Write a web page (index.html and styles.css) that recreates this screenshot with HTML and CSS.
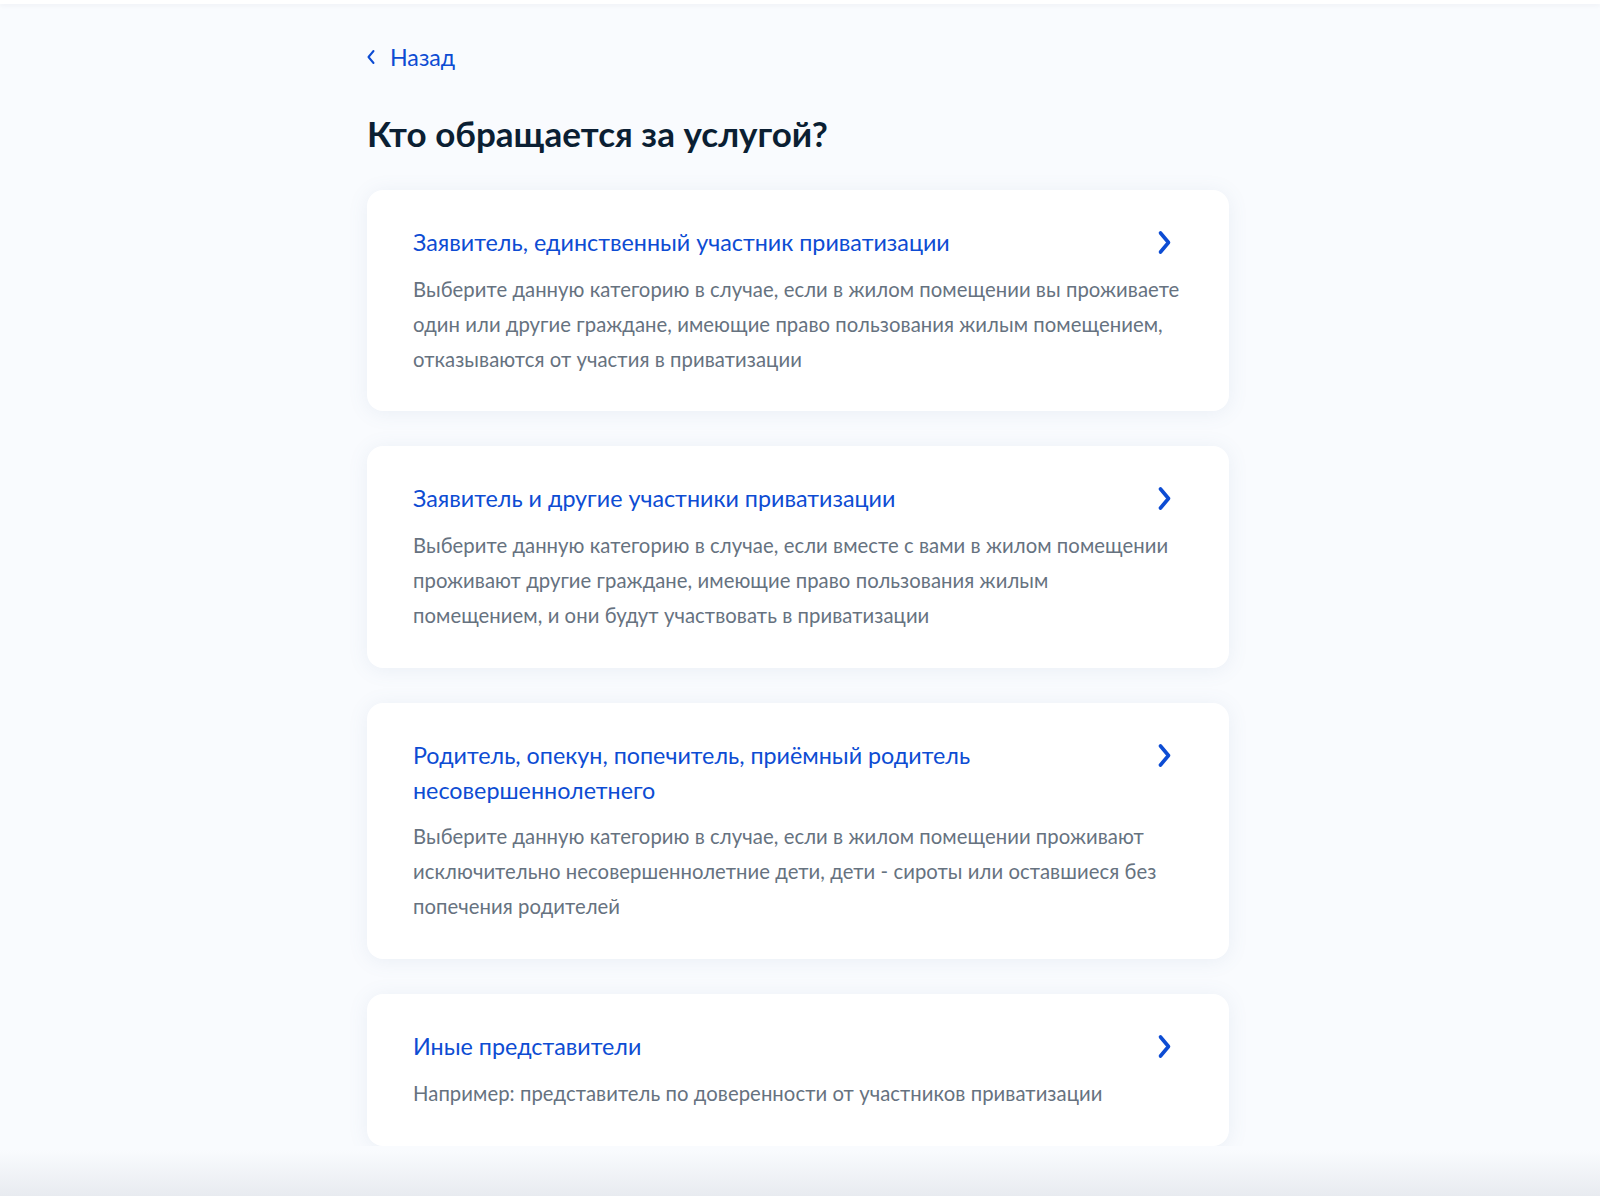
FILE: index.html
```html
<!DOCTYPE html>
<html lang="ru">
<head>
  <meta charset="UTF-8">
  <meta name="viewport" content="width=device-width, initial-scale=1.0">
  <title>Кто обращается за услугой?</title>
  <link rel="stylesheet" href="styles.css">
</head>
<body>
  <div class="topbar"></div>
  <div class="container">
    <a class="back" href="#">
      <svg class="back-icon" width="10" height="16" viewBox="0 0 10 16"><path d="M7.5 2 L2.5 8 L7.5 14" fill="none" stroke="currentColor" stroke-width="2" stroke-linecap="round" stroke-linejoin="round"/></svg>
      Назад
    </a>
    <h1 class="page-title">Кто обращается за услугой?</h1>

    <div class="choices">
      <a class="choice" href="#">
        <div class="choice-head">
          <div class="choice-title">Заявитель, единственный участник приватизации</div>
          <svg class="arrow" width="35" height="35" viewBox="0 0 35 35"><path d="M12.5 8 L20.5 17.5 L12.5 27" fill="none" stroke="currentColor" stroke-width="3.6" stroke-linecap="round" stroke-linejoin="round"/></svg>
        </div>
        <div class="choice-text">Выберите данную категорию в случае, если в жилом помещении вы проживаете один или другие граждане, имеющие право пользования жилым помещением, отказываются от участия в приватизации</div>
      </a>

      <a class="choice" href="#">
        <div class="choice-head">
          <div class="choice-title">Заявитель и другие участники приватизации</div>
          <svg class="arrow" width="35" height="35" viewBox="0 0 35 35"><path d="M12.5 8 L20.5 17.5 L12.5 27" fill="none" stroke="currentColor" stroke-width="3.6" stroke-linecap="round" stroke-linejoin="round"/></svg>
        </div>
        <div class="choice-text">Выберите данную категорию в случае, если вместе с вами в жилом помещении проживают другие граждане, имеющие право пользования жилым помещением, и они будут участвовать в приватизации</div>
      </a>

      <a class="choice" href="#">
        <div class="choice-head">
          <div class="choice-title">Родитель, опекун, попечитель, приёмный родитель несовершеннолетнего</div>
          <svg class="arrow" width="35" height="35" viewBox="0 0 35 35"><path d="M12.5 8 L20.5 17.5 L12.5 27" fill="none" stroke="currentColor" stroke-width="3.6" stroke-linecap="round" stroke-linejoin="round"/></svg>
        </div>
        <div class="choice-text">Выберите данную категорию в случае, если в жилом помещении проживают исключительно несовершеннолетние дети, дети - сироты или оставшиеся без попечения родителей</div>
      </a>

      <a class="choice" href="#">
        <div class="choice-head">
          <div class="choice-title">Иные представители</div>
          <svg class="arrow" width="35" height="35" viewBox="0 0 35 35"><path d="M12.5 8 L20.5 17.5 L12.5 27" fill="none" stroke="currentColor" stroke-width="3.6" stroke-linecap="round" stroke-linejoin="round"/></svg>
        </div>
        <div class="choice-text">Например: представитель по доверенности от участников приватизации</div>
      </a>
    </div>
  </div>
</body>
</html>
```

FILE: styles.css
```css
html {
  min-height: 100%;
  background: linear-gradient(to bottom, #f9fbfe 0, #f9fbfe 1150px, #e8ebf0 1196px);
}

body {
  margin: 0;
  font-family: Lato, "Noto Sans", sans-serif;
  color: #0b1f33;
}

.topbar {
  height: 4px;
  background-color: #fff;
  box-shadow: 0 2px 4px rgba(11, 31, 51, 0.04);
}

.container {
  width: 862px;
  margin: 0 auto;
  padding-right: 4px;
  padding-top: 37px;
}

.back {
  display: inline-flex;
  align-items: center;
  gap: 14px;
  color: #0d4cd3;
  font-size: 23.2px;
  line-height: 32px;
  text-decoration: none;
}

.back-icon {
  margin-left: -1px;
}

.page-title {
  margin: 37px 0 0;
  font-size: 35px;
  line-height: 46px;
  font-weight: 700;
  color: #0b1f33;
}

.choices {
  display: flex;
  flex-direction: column;
  gap: 35px;
  margin-top: 34px;
}

.choice {
  display: block;
  background-color: #fff;
  border-radius: 16px;
  padding: 35px 46px 35px;
  box-shadow: 0 2px 20px rgba(102, 129, 171, 0.1);
  text-decoration: none;
}

.choice-head {
  display: flex;
  align-items: flex-start;
  justify-content: space-between;
  gap: 24px;
}

.choice-title {
  color: #0d4cd3;
  font-size: 23.3px;
  line-height: 34.8px;
}

.arrow {
  flex-shrink: 0;
  color: #0d4cd3;
}

.choice-text {
  max-width: 767px;
  margin-top: 12px;
  color: #66727f;
  font-size: 20.3px;
  letter-spacing: 0.06px;
  line-height: 34.8px;
}
```
